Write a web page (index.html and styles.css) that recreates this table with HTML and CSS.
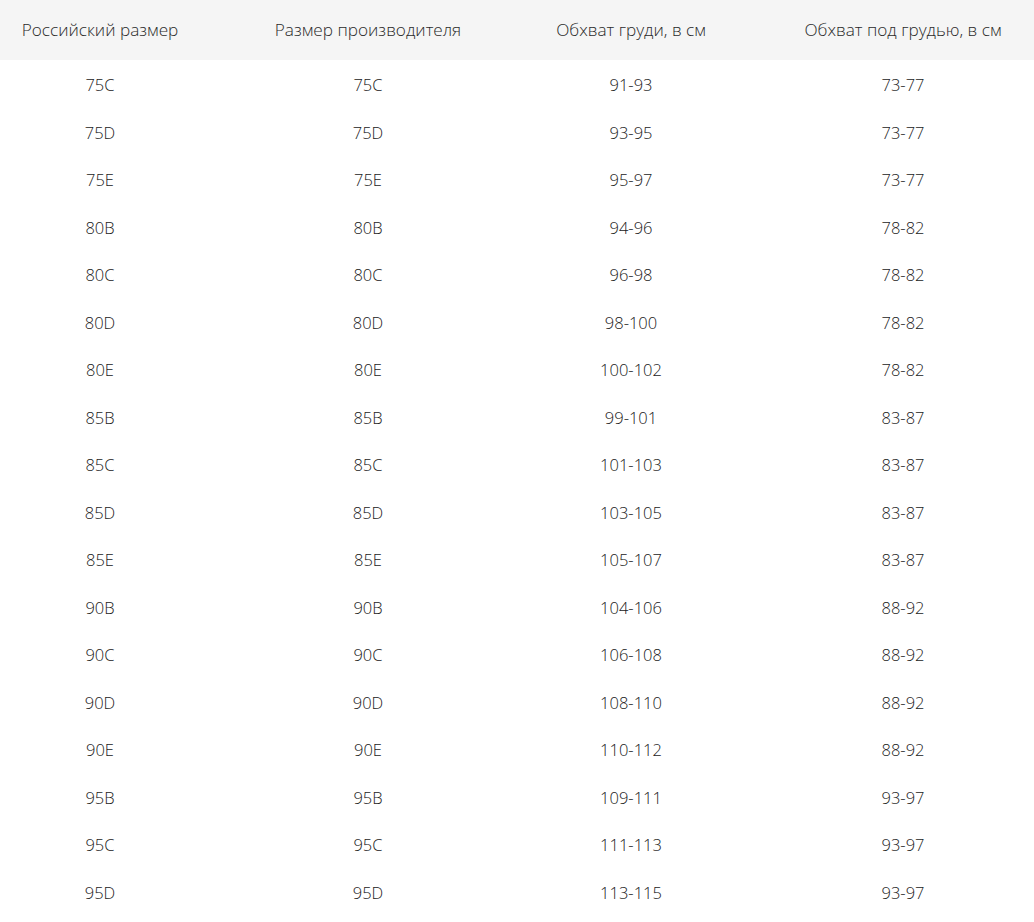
FILE: index.html
```html
<!DOCTYPE html>
<html lang="ru">
<head>
<meta charset="utf-8">
<title>Таблица размеров</title>
<link rel="stylesheet" href="styles.css">
</head>
<body>
<div class="size-table">
  <div class="row head">
    <div class="cell">Российский размер</div>
    <div class="cell">Размер производителя</div>
    <div class="cell">Обхват груди, в см</div>
    <div class="cell">Обхват под грудью, в см</div>
  </div>
  <div class="row"><div class="cell">75C</div><div class="cell">75C</div><div class="cell">91-93</div><div class="cell">73-77</div></div>
  <div class="row"><div class="cell">75D</div><div class="cell">75D</div><div class="cell">93-95</div><div class="cell">73-77</div></div>
  <div class="row"><div class="cell">75E</div><div class="cell">75E</div><div class="cell">95-97</div><div class="cell">73-77</div></div>
  <div class="row"><div class="cell">80B</div><div class="cell">80B</div><div class="cell">94-96</div><div class="cell">78-82</div></div>
  <div class="row"><div class="cell">80C</div><div class="cell">80C</div><div class="cell">96-98</div><div class="cell">78-82</div></div>
  <div class="row"><div class="cell">80D</div><div class="cell">80D</div><div class="cell">98-100</div><div class="cell">78-82</div></div>
  <div class="row"><div class="cell">80E</div><div class="cell">80E</div><div class="cell">100-102</div><div class="cell">78-82</div></div>
  <div class="row"><div class="cell">85B</div><div class="cell">85B</div><div class="cell">99-101</div><div class="cell">83-87</div></div>
  <div class="row"><div class="cell">85C</div><div class="cell">85C</div><div class="cell">101-103</div><div class="cell">83-87</div></div>
  <div class="row"><div class="cell">85D</div><div class="cell">85D</div><div class="cell">103-105</div><div class="cell">83-87</div></div>
  <div class="row"><div class="cell">85E</div><div class="cell">85E</div><div class="cell">105-107</div><div class="cell">83-87</div></div>
  <div class="row"><div class="cell">90B</div><div class="cell">90B</div><div class="cell">104-106</div><div class="cell">88-92</div></div>
  <div class="row"><div class="cell">90C</div><div class="cell">90C</div><div class="cell">106-108</div><div class="cell">88-92</div></div>
  <div class="row"><div class="cell">90D</div><div class="cell">90D</div><div class="cell">108-110</div><div class="cell">88-92</div></div>
  <div class="row"><div class="cell">90E</div><div class="cell">90E</div><div class="cell">110-112</div><div class="cell">88-92</div></div>
  <div class="row"><div class="cell">95B</div><div class="cell">95B</div><div class="cell">109-111</div><div class="cell">93-97</div></div>
  <div class="row"><div class="cell">95C</div><div class="cell">95C</div><div class="cell">111-113</div><div class="cell">93-97</div></div>
  <div class="row"><div class="cell">95D</div><div class="cell">95D</div><div class="cell">113-115</div><div class="cell">93-97</div></div>
</div>
</body>
</html>
```

FILE: styles.css
```css
html, body {
  margin: 0;
  padding: 0;
  background: #fff;
  overflow: hidden;
}
body {
  font-family: "Open Sans", "Noto Sans", sans-serif;
  font-size: 16.5px;
  font-weight: 300;
  color: #222;
}
.size-table {
  width: 1034px;
}
.row {
  display: grid;
  grid-template-columns: 200px 336px 190px 1fr;
  height: 47.5px;
  align-items: center;
}
.row.head {
  height: 60px;
  background: #f5f5f5;
  color: #2a2a2a;
  font-size: 17.2px;
}
.cell {
  text-align: center;
  white-space: nowrap;
  padding-top: 2px;
}
.head .cell {
  padding-top: 0;
  padding-bottom: 1px;
}
.cell:nth-child(4) {
  padding-left: 46px;
}
```
